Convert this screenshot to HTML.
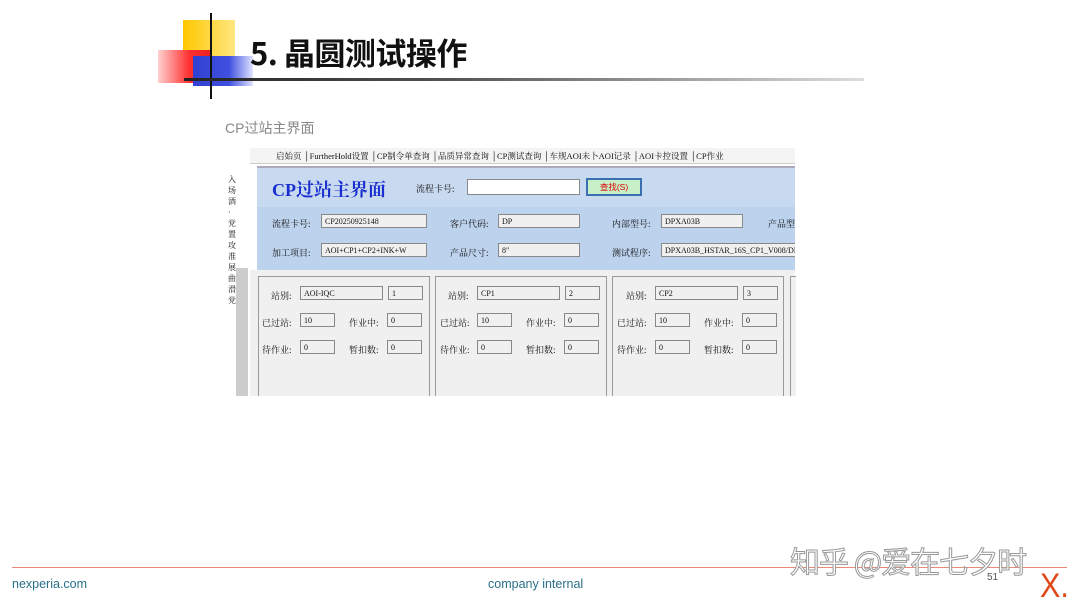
<!DOCTYPE html>
<html><head><meta charset="utf-8"><style>
body{margin:0;width:1080px;height:605px;background:#fff;position:relative;overflow:hidden;font-family:"Liberation Sans","Noto Sans CJK SC",sans-serif}
.a{position:absolute}
.s{font-family:"Liberation Serif","Noto Serif CJK SC",serif;font-size:9px;color:#111;white-space:nowrap}
.in{position:absolute;background:#f0f0f0;border:1px solid #888;height:14px;font-family:"Liberation Serif",serif;font-size:8px;line-height:14px;padding-left:3px;box-sizing:border-box;color:#111}
.card{position:absolute;top:276px;height:125px;width:172px;border:1px solid #999;background:#f0f0f0;box-sizing:border-box}
</style></head><body>
<div class="a" style="left:183px;top:20px;width:52px;height:46px;background:linear-gradient(90deg,#ffc800,#ffe680)"></div>
<div class="a" style="left:158px;top:50px;width:52px;height:33px;background:linear-gradient(90deg,#ffd0d0,#ff3030 60%,#ee2020)"></div>
<div class="a" style="left:193px;top:56px;width:60px;height:30px;background:linear-gradient(90deg,#3040d0,#4050e0 60%,#e0e4ff)"></div>
<div class="a" style="left:210px;top:13px;width:2px;height:86px;background:#111"></div>
<div class="a" style="left:184px;top:78px;width:680px;height:3px;background:linear-gradient(90deg,#222,#555 40%,#ddd)"></div>
<div class="a" style="left:250px;top:31px;font-size:31px;font-weight:bold;color:#111;font-family:'Noto Sans CJK SC',sans-serif;line-height:42px;letter-spacing:-0.5px">5. 晶圆测试操作</div>
<div class="a" style="left:225px;top:118px;font-size:14px;color:#888">CP过站主界面</div>

<div class="a" style="left:228px;top:148px;width:567px;height:248px;background:#fff;overflow:hidden">
 <div class="a" style="left:0;top:0;width:567px;height:15px;background:#f4f4f4;border-bottom:1px solid #ccc"></div>
 <div class="a s" style="left:48px;top:2px;font-size:8.5px">启始页 │FurtherHold设置 │CP制令单查询 │品质异常查询 │CP测试查询 │车规AOI未卜AOI记录 │AOI卡控设置 │CP作业</div>
 <div class="a" style="left:0;top:0;width:22px;height:248px;background:#fff"></div>
 <div class="a" style="left:8px;top:120px;width:12px;height:128px;background:#ccc"></div>
 <div class="a s" style="left:0px;top:26px;width:8px;line-height:11px;font-size:8px;white-space:normal">入场酒·党置攻准展曲滑党</div>
 <div class="a" style="left:29px;top:18px;width:540px;height:41px;background:#c8daf0;border-top:2px solid #aab"></div>
 <div class="a" style="left:44px;top:28px;font-family:'Liberation Serif','Noto Serif CJK SC',serif;font-size:18px;font-weight:bold;color:#1a2fd0">CP过站主界面</div>
 <div class="a s" style="left:188px;top:34px">流程卡号:</div>
 <div class="a" style="left:239px;top:31px;width:113px;height:16px;background:#fff;border:1px solid #888;box-sizing:border-box"></div>
 <div class="a" style="left:358px;top:30px;width:56px;height:18px;background:#c8f0c8;border:2px solid #3a6fb0;box-sizing:border-box;font-size:8.5px;color:#d00;text-align:center;line-height:14px">查找(S)</div>
 <div class="a" style="left:29px;top:59px;width:540px;height:63px;background:#bdd2ec"></div>
 <div class="a s" style="left:44px;top:69px">流程卡号:</div><div class="in" style="left:93px;top:66px;width:106px">CP20250925148</div>
 <div class="a s" style="left:222px;top:69px">客户代码:</div><div class="in" style="left:270px;top:66px;width:82px">DP</div>
 <div class="a s" style="left:384px;top:69px">内部型号:</div><div class="in" style="left:433px;top:66px;width:82px">DPXA03B</div>
 <div class="a s" style="left:540px;top:69px">产品型</div>
 <div class="a s" style="left:44px;top:98px">加工项目:</div><div class="in" style="left:93px;top:95px;width:106px">AOI+CP1+CP2+INK+W</div>
 <div class="a s" style="left:222px;top:98px">产品尺寸:</div><div class="in" style="left:270px;top:95px;width:82px">8"</div>
 <div class="a s" style="left:384px;top:98px">测试程序:</div><div class="in" style="left:433px;top:95px;width:140px">DPXA03B_HSTAR_16S_CP1_V008/DI</div>
 <div class="a" style="left:22px;top:122px;width:550px;height:126px;background:#f0f0f0"></div>
</div>
<div class="card" style="left:258px"></div>
<div class="card" style="left:435px"></div>
<div class="card" style="left:612px"></div>
<div class="card" style="left:790px;width:6px;border-right:none"></div>
<div class="a" style="left:228px;top:396px;width:570px;height:10px;background:#fff"></div>

<div class="a s" style="left:271px;top:289px">站别:</div><div class="in" style="left:300px;top:286px;width:83px">AOI-IQC</div><div class="in" style="left:388px;top:286px;width:35px">1</div>
<div class="a s" style="left:262px;top:316px">已过站:</div><div class="in" style="left:300px;top:313px;width:35px">10</div>
<div class="a s" style="left:349px;top:316px">作业中:</div><div class="in" style="left:387px;top:313px;width:35px">0</div>
<div class="a s" style="left:262px;top:343px">待作业:</div><div class="in" style="left:300px;top:340px;width:35px">0</div>
<div class="a s" style="left:349px;top:343px">暂扣数:</div><div class="in" style="left:387px;top:340px;width:35px">0</div>

<div class="a s" style="left:448px;top:289px">站别:</div><div class="in" style="left:477px;top:286px;width:83px">CP1</div><div class="in" style="left:565px;top:286px;width:35px">2</div>
<div class="a s" style="left:440px;top:316px">已过站:</div><div class="in" style="left:477px;top:313px;width:35px">10</div>
<div class="a s" style="left:526px;top:316px">作业中:</div><div class="in" style="left:564px;top:313px;width:35px">0</div>
<div class="a s" style="left:440px;top:343px">待作业:</div><div class="in" style="left:477px;top:340px;width:35px">0</div>
<div class="a s" style="left:526px;top:343px">暂扣数:</div><div class="in" style="left:564px;top:340px;width:35px">0</div>

<div class="a s" style="left:626px;top:289px">站别:</div><div class="in" style="left:655px;top:286px;width:83px">CP2</div><div class="in" style="left:743px;top:286px;width:35px">3</div>
<div class="a s" style="left:617px;top:316px">已过站:</div><div class="in" style="left:655px;top:313px;width:35px">10</div>
<div class="a s" style="left:704px;top:316px">作业中:</div><div class="in" style="left:742px;top:313px;width:35px">0</div>
<div class="a s" style="left:617px;top:343px">待作业:</div><div class="in" style="left:655px;top:340px;width:35px">0</div>
<div class="a s" style="left:704px;top:343px">暂扣数:</div><div class="in" style="left:742px;top:340px;width:35px">0</div>

<div class="a" style="left:12px;top:567px;width:1055px;height:1px;background:#e88a7a"></div>
<div class="a" style="left:12px;top:577px;font-size:12.5px;color:#2a6f8a">nexperia.com</div>
<div class="a" style="left:488px;top:577px;font-size:12.5px;color:#2a6f8a">company internal</div>
<div class="a" style="left:790px;top:540px;font-size:30px;color:#fff;-webkit-text-stroke:1px #999;font-family:'Noto Sans CJK SC',sans-serif;line-height:40px;letter-spacing:-1px">知乎 @爱在七夕时</div>
<div class="a" style="left:987px;top:572px;font-size:10px;color:#555">51</div>
<div class="a" style="left:1040px;top:568px;font-size:34px;color:#e04818;font-family:'Liberation Sans',sans-serif;line-height:36px;transform:scaleX(0.9);transform-origin:left">X.</div>
</body></html>
